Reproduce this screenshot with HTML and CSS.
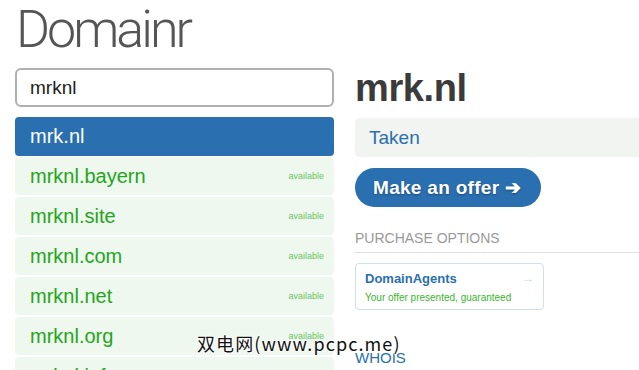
FILE: index.html
```html
<!DOCTYPE html>
<html lang="en">
<head>
    <meta charset="UTF-8">
    <meta name="viewport" content="width=device-width, initial-scale=1.0">
    <title>Domainr</title>
    <link rel="stylesheet" href="styles.css">
</head>
<body>
    <div class="page">
        <h1 class="logo">Domainr</h1>

        <div class="columns">
            <div class="results">
                <input type="text" class="search" value="mrknl">
                <ul class="result-list">
                    <li class="result selected">mrk.nl</li>
                    <li class="result">mrknl.bayern<span class="status">available</span></li>
                    <li class="result">mrknl.site<span class="status">available</span></li>
                    <li class="result">mrknl.com<span class="status">available</span></li>
                    <li class="result">mrknl.net<span class="status">available</span></li>
                    <li class="result">mrknl.org<span class="status">available</span></li>
                    <li class="result">mrknl.info<span class="status">available</span></li>
                </ul>
            </div>

            <div class="detail">
                <h2 class="domain">mrk.nl</h2>
                <div class="state">Taken</div>
                <a href="#" class="offer">Make an offer &#x2794;</a>

                <h3 class="section-title">Purchase options</h3>
                <a href="#" class="option">
                    <span class="option-name">DomainAgents <span class="option-arrow">&#x2192;</span></span>
                    <span class="option-desc">Your offer presented, guaranteed</span>
                </a>

                <h3 class="whois">WHOIS</h3>
            </div>
        </div>
    </div>

    <div class="watermark">双电网(www.pcpc.me)</div>
</body>
</html>
```

FILE: styles.css
```css
body {
    margin: 0;
    font-family: 'Liberation Sans', Arial, sans-serif;
    background: #fff;
    overflow: hidden;
    width: 639px;
    height: 370px;
    position: relative;
}

.page {
    padding: 0 0 0 15px;
    width: 700px;
}

.logo {
    margin: 0;
    padding: 0 0 0 1px;
    height: 68px;
    font-family: 'Roboto', sans-serif;
    font-weight: 300;
    font-size: 52px;
    line-height: 60px;
    color: #555;
    letter-spacing: -3px;
}

.columns {
    display: flex;
    gap: 21px;
}

.results {
    width: 319px;
}

.search {
    display: block;
    width: 100%;
    height: 39px;
    box-sizing: border-box;
    margin: 0 0 10px;
    padding: 0 13px;
    font-family: 'Liberation Sans', Arial, sans-serif;
    font-size: 19px;
    color: #222;
    border: 2px solid #b0b0b0;
    border-radius: 6px;
    outline: none;
}

.result-list {
    list-style: none;
    margin: 0;
    padding: 0;
}

.result {
    display: flex;
    align-items: center;
    justify-content: space-between;
    height: 38px;
    margin-bottom: 2px;
    padding: 0 10px 0 15px;
    font-size: 20px;
    color: #25a51c;
    background: #eef8ee;
    border-radius: 4px;
}

.result.selected {
    height: 39px;
    margin-bottom: 1px;
    color: #fff;
    background: #2a6fb0;
}

.status {
    font-size: 9px;
    color: #6cc464;
}

.detail {
    width: 319px;
}

.domain {
    margin: 0;
    height: 50px;
    font-size: 38px;
    line-height: 40px;
    font-weight: bold;
    color: #3b3b3b;
    letter-spacing: -0.4px;
}

.state {
    height: 39px;
    line-height: 39px;
    padding: 0 14px;
    font-size: 19px;
    color: #2a6fb0;
    background: #f2f4f2;
    border-radius: 4px;
}

.offer {
    display: inline-block;
    margin-top: 11px;
    height: 39px;
    line-height: 40px;
    padding: 0 20px 0 18px;
    font-size: 19px;
    font-weight: bold;
    color: #fff;
    background: #2a6fb0;
    border-radius: 20px;
    text-decoration: none;
    letter-spacing: 0.3px;
    text-shadow: 0 1px 2px rgba(0, 0, 0, 0.35);
}

.section-title {
    margin: 23px 0 0;
    padding-bottom: 6px;
    font-size: 14px;
    font-weight: normal;
    text-transform: uppercase;
    color: #999;
    border-bottom: 1px solid #dde1e4;
}

.option {
    display: block;
    width: 189px;
    box-sizing: border-box;
    margin-top: 10px;
    padding: 7px 9px 6px;
    border: 1px solid #cfe0ec;
    border-radius: 4px;
    text-decoration: none;
}

.option-name {
    display: flex;
    justify-content: space-between;
    font-size: 13px;
    font-weight: bold;
    color: #2a6fb0;
}

.option-arrow {
    font-weight: normal;
    color: #c8dbe9;
}

.option-desc {
    display: block;
    margin-top: 6px;
    font-size: 10px;
    color: #3bb52f;
}

.whois {
    margin: 39px 0 0;
    font-size: 15px;
    font-weight: normal;
    color: #2a6fb0;
}

.watermark {
    position: absolute;
    left: 197px;
    top: 330px;
    font-family: 'Noto Sans CJK SC', sans-serif;
    font-size: 18px;
    letter-spacing: 1.1px;
    color: #111;
    text-shadow: 1px 0 #fff, -1px 0 #fff, 0 1px #fff, 0 -1px #fff;
    white-space: nowrap;
}
```
